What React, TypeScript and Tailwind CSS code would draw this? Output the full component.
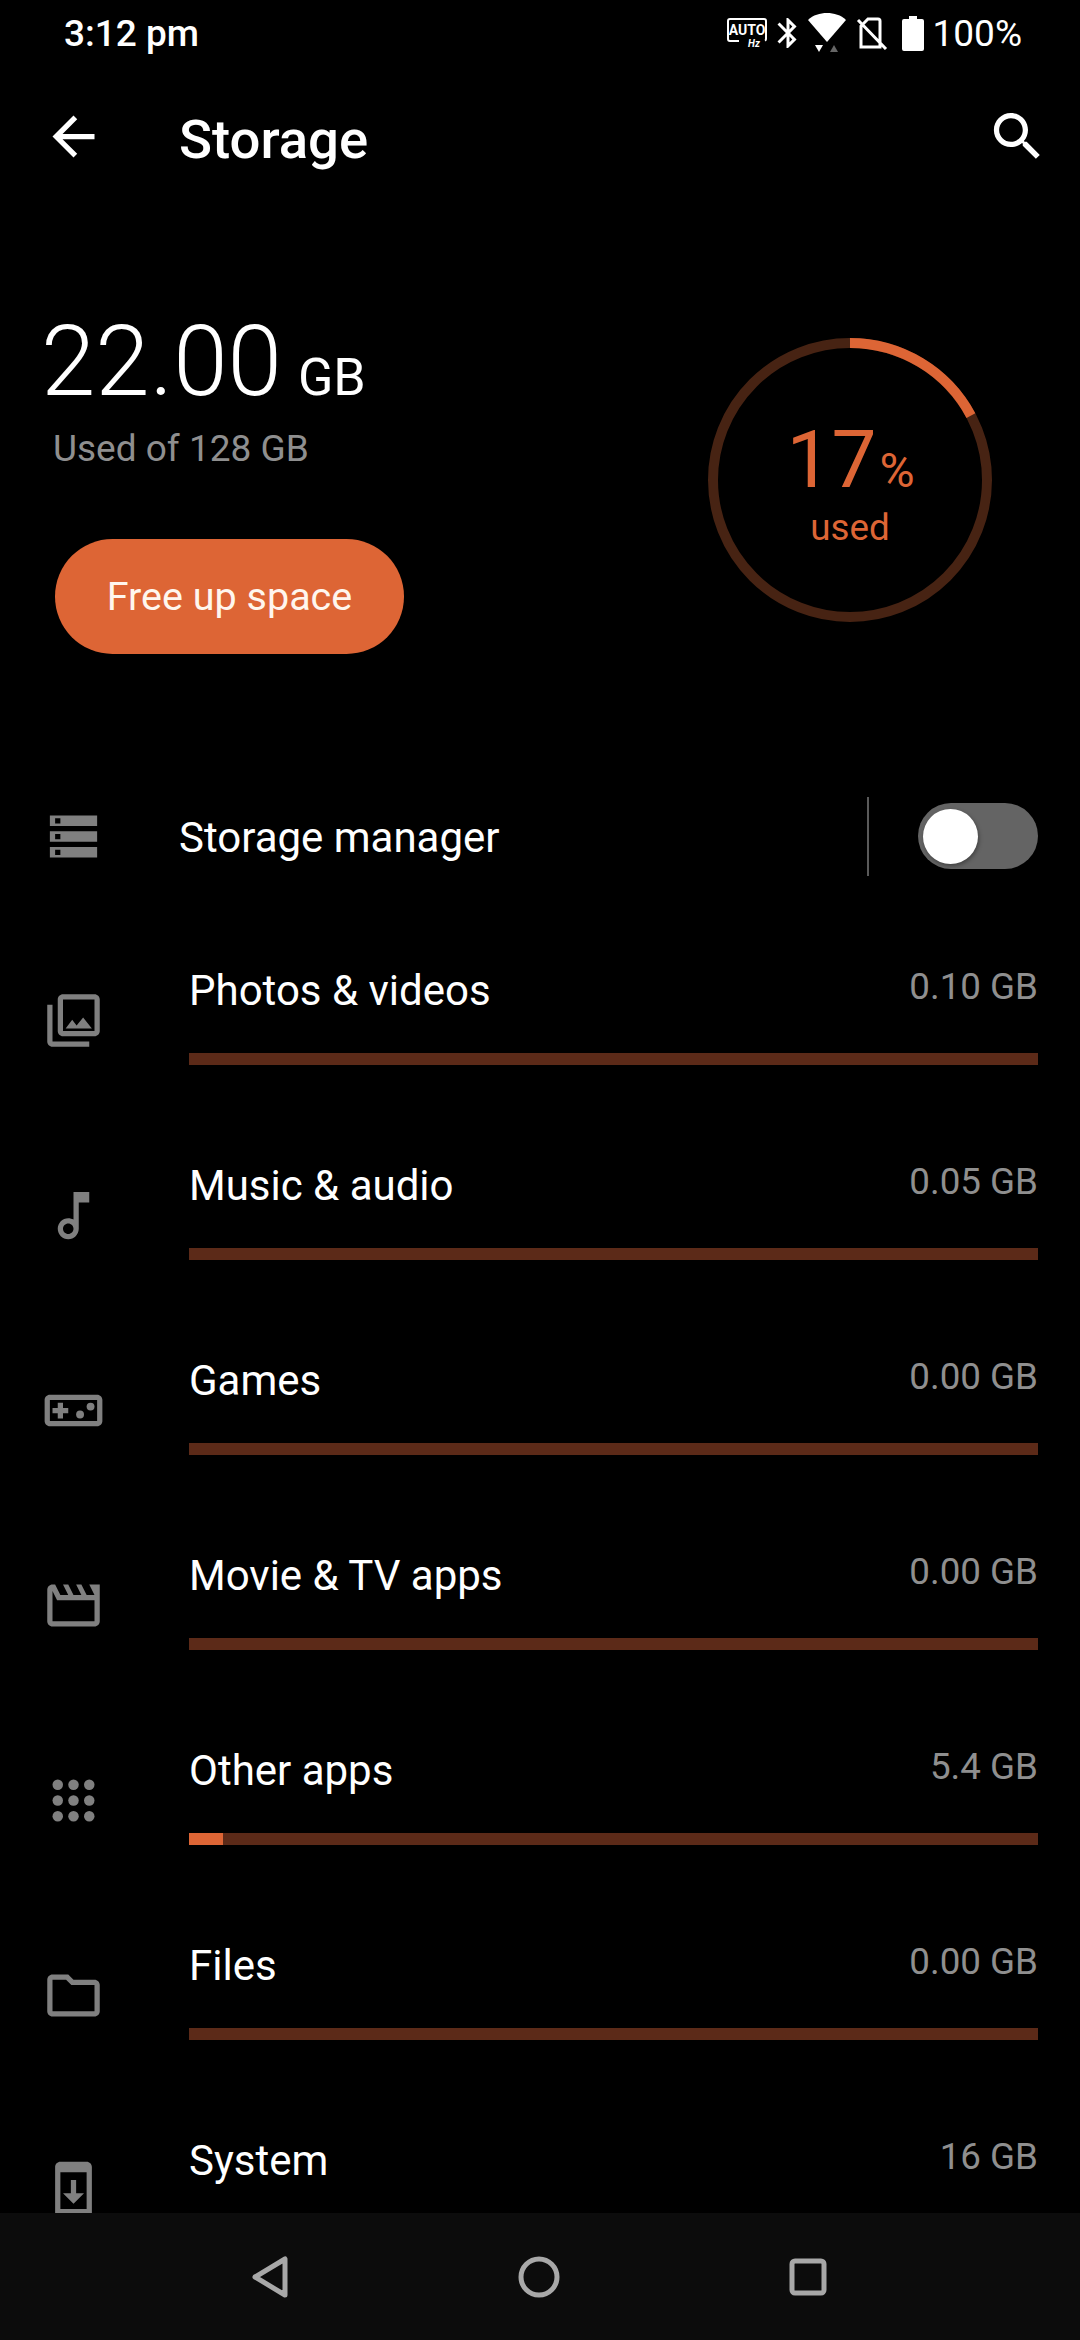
import type { ReactNode } from "react";

const ORANGE = "#dd6535";

function Icon({ d, children }: { d?: string; children?: ReactNode }) {
  return (
    <svg viewBox="0 0 24 24" className="h-[63px] w-[63px] shrink-0" fill="#808080">
      {d && <path d={d} />}
      {children}
    </svg>
  );
}

const rows: { label: string; value: string; fill: string; icon: ReactNode }[] = [
  {
    label: "Photos & videos",
    value: "0.10 GB",
    fill: "w-0",
    icon: (
      <Icon d="M20 4v12H8V4h12m0-2H8c-1.1 0-2 .9-2 2v12c0 1.1.9 2 2 2h12c1.1 0 2-.9 2-2V4c0-1.1-.9-2-2-2zm-8.5 9.67l1.69 2.26 2.48-3.1L19 15H9zM2 6v14c0 1.1.9 2 2 2h14v-2H4V6H2z" />
    ),
  },
  {
    label: "Music & audio",
    value: "0.05 GB",
    fill: "w-0",
    icon: (
      <Icon d="M12 3v10.55c-.59-.34-1.27-.55-2-.55-2.21 0-4 1.79-4 4s1.79 4 4 4 4-1.79 4-4V7h4V3h-6zm-2 16c-1.1 0-2-.9-2-2s.9-2 2-2 2 .9 2 2-.9 2-2 2z" />
    ),
  },
  {
    label: "Games",
    value: "0.00 GB",
    fill: "w-0",
    icon: (
      <Icon d="M21 6H3c-1.1 0-2 .9-2 2v8c0 1.1.9 2 2 2h18c1.1 0 2-.9 2-2V8c0-1.1-.9-2-2-2zm0 10H3V8h18v8zM6 15h2v-2h2v-2H8V9H6v2H4v2h2z">
        <circle cx="14.5" cy="13.5" r="1.5" />
        <circle cx="18.5" cy="10.5" r="1.5" />
      </Icon>
    ),
  },
  {
    label: "Movie & TV apps",
    value: "0.00 GB",
    fill: "w-0",
    icon: (
      <Icon d="M4 6.47L5.76 10H20v8H4V6.47M22 4h-4l2 4h-3l-2-4h-2l2 4h-3l-2-4H8l2 4H7L5 4H4c-1.1 0-1.99.9-1.99 2L2 18c0 1.1.9 2 2 2h16c1.1 0 2-.9 2-2V4z" />
    ),
  },
  {
    label: "Other apps",
    value: "5.4 GB",
    fill: "w-[34px]",
    icon: (
      <Icon>
        {[6, 12, 18].map((y) =>
          [6, 12, 18].map((x) => <circle key={`${x}-${y}`} cx={x} cy={y} r="2" />),
        )}
      </Icon>
    ),
  },
  {
    label: "Files",
    value: "0.00 GB",
    fill: "w-0",
    icon: (
      <Icon d="M9.17 6l2 2H20v10H4V6h5.17M10 4H4c-1.1 0-1.99.9-1.99 2L2 18c0 1.1.9 2 2 2h16c1.1 0 2-.9 2-2V8c0-1.1-.9-2-2-2h-8l-2-2z" />
    ),
  },
  {
    label: "System",
    value: "16 GB",
    fill: "w-[20px]",
    icon: (
      <Icon d="M17 1.01L7 1c-1.1 0-2 .9-2 2v18c0 1.1.9 2 2 2h10c1.1 0 2-.9 2-2V3c0-1.1-.9-1.99-2-1.99zM17 19H7V5h10v14zm-1-6h-3V8h-2v5H8l4 4 4-4z" />
    ),
  },
];

function StatusBar() {
  return (
    <div className="flex h-[66px] items-center justify-between pl-[64px] pr-[58px] text-white">
      <span className="text-[37px] font-medium leading-none">3:12 pm</span>
      <div className="flex items-center">
        {/* refresh rate */}
        <svg viewBox="0 0 40 30" className="h-[30px] w-[40px]">
          <path d="M12 23H3a2 2 0 0 1-2-2V3a2 2 0 0 1 2-2h34a2 2 0 0 1 2 2v18a2 2 0 0 1-1 1.7" fill="none" stroke="#fff" strokeWidth="2" />
          <text x="20" y="17" textAnchor="middle" fontSize="14" fontWeight="700" fill="#fff" fontFamily="Roboto">AUTO</text>
          <text x="27" y="29" textAnchor="middle" fontSize="10" fontWeight="700" fontStyle="italic" fill="#fff" fontFamily="Roboto">Hz</text>
        </svg>
        <svg viewBox="0 0 24 24" className="ml-[3px] h-[36px] w-[36px]" fill="#fff">
          <path d="M17.71 7.71L12 2h-1v7.59L6.41 5 5 6.41 10.59 12 5 17.59 6.41 19 11 14.41V22h1l5.71-5.71-4.3-4.29 4.3-4.29zM13 5.83l1.88 1.88L13 9.59V5.83zm1.88 10.46L13 18.17v-3.76l1.88 1.88z" />
        </svg>
        {/* wifi + activity arrows */}
        <svg viewBox="0 0 40 42" className="ml-[1px] h-[42px] w-[40px]">
          <path d="M20 30 1 8C6 3 13 1 20 1s14 2 19 7z" fill="#fff" />
          <path d="M8 33h8l-4 7z" fill="#fff" />
          <path d="M23 40h8l-4-7z" fill="#666" />
        </svg>
        <svg viewBox="0 0 32 34" className="ml-[9px] h-[34px] w-[32px]" fill="none" stroke="#fff" strokeWidth="3">
          <path d="M5 10v21h19V5a2 2 0 0 0-2-2H12zM2 4l28 29" />
        </svg>
        <svg viewBox="0 0 22 35" className="ml-[14px] h-[35px] w-[22px]" fill="#fff">
          <path d="M7 0h8v3h5a2 2 0 0 1 2 2v28a2 2 0 0 1-2 2H2a2 2 0 0 1-2-2V5a2 2 0 0 1 2-2h5z" />
        </svg>
        <span className="ml-[9px] text-[37px] leading-none">100%</span>
      </div>
    </div>
  );
}

function AppBar() {
  return (
    <div className="flex h-[144px] items-center pb-[3px] pl-[42px] pr-[31px] text-white">
      <svg viewBox="0 0 24 24" className="h-[63px] w-[63px]" fill="#fff">
        <path d="M20 11H7.83l5.59-5.59L12 4l-8 8 8 8 1.41-1.41L7.83 13H20v-2z" />
      </svg>
      <h1 className="ml-[74px] pt-[6px] text-[54.5px] font-medium leading-none">Storage</h1>
      <svg viewBox="0 0 24 24" className="ml-auto h-[63px] w-[63px]" fill="#fff">
        <path d="M15.5 14h-.79l-.28-.27C15.41 12.59 16 11.11 16 9.5 16 5.91 13.09 3 9.5 3S3 5.91 3 9.5 5.91 16 9.5 16c1.61 0 3.09-.59 4.23-1.57l.27.28v.79l5 4.99L20.49 19l-4.99-5zm-6 0C7.01 14 5 11.99 5 9.5S7.01 5 9.5 5 14 7.01 14 9.5 11.99 14 9.5 14z" />
      </svg>
    </div>
  );
}

function Ring() {
  const r = 137;
  const c = 2 * Math.PI * r;
  return (
    <div className="relative ml-[1px] h-[284px] w-[284px]">
      <svg viewBox="0 0 284 284" className="absolute inset-0 -rotate-90" fill="none" strokeWidth="10">
        <circle cx="142" cy="142" r={r} stroke="#472313" />
        <circle cx="142" cy="142" r={r} stroke={ORANGE} strokeDasharray={`${c * 0.172} ${c}`} />
      </svg>
      <div className="absolute inset-0 flex flex-col items-center text-[#dd6535]">
        <div className="ml-[1px] mt-[82px] flex h-[80px] items-baseline leading-none">
          <span className="text-[80px] font-normal">17</span>
          <span className="ml-[3px] text-[48px] font-normal">%</span>
        </div>
        <span className="mt-[10px] text-[36.75px] leading-none">used</span>
      </div>
    </div>
  );
}

function Hero() {
  return (
    <div className="flex h-[551px] items-start justify-between pl-[55px] pr-[88px] pt-[128px]">
      <div className="flex flex-col">
        <div className="-ml-[14px] -mt-[31px] flex items-baseline text-white">
          <span className="text-[98px] font-[350] leading-[110px]">22.00</span>
          <span className="ml-[16px] text-[52px] leading-none">GB</span>
        </div>
        <span className="-ml-[2px] mt-[10px] text-[37px] leading-[44px] text-[#8f8f8f]">Used of 128 GB</span>
        <button className="mt-[68px] flex h-[115px] w-[349px] items-center justify-center rounded-full bg-[#dd6535] text-[39.5px] text-[#fff6ee]">
          Free up space
        </button>
      </div>
      <Ring />
    </div>
  );
}

function ManagerRow() {
  return (
    <div className="mb-[12px] flex h-[150px] items-center pl-[42px] pr-[42px]">
      <Icon>
        <path
          fillRule="evenodd"
          d="M3 4h18v4H3zM5 5v2h2V5zM3 10h18v4H3zM5 11v2h2v-2zM3 16h18v4H3zM5 17v2h2v-2z"
        />
      </Icon>
      <span className="ml-[74px] pt-[4px] text-[42px] leading-none text-white">Storage manager</span>
      <div className="ml-auto h-[79px] w-[2px] bg-[#5a5a5a]" />
      <div className="ml-[49px] flex h-[66px] w-[120px] items-center rounded-full bg-[#646464] pl-[5px]">
        <div className="h-[55px] w-[55px] rounded-full bg-white shadow-[1px_2px_4px_rgba(0,0,0,0.35)]" />
      </div>
    </div>
  );
}

function StorageRow({ label, value, fill, icon }: (typeof rows)[number]) {
  return (
    <div className="flex h-[195px] shrink-0 items-center pl-[42px] pr-[42px]">
      {icon}
      <div className="ml-[84px] h-full flex-1 pt-[35px]">
        <div className="flex h-[62px] items-start justify-between">
          <span className="text-[42px] leading-[65px] text-white">{label}</span>
          <span className="text-[36.75px] leading-[58px] text-[#8f8f8f]">{value}</span>
        </div>
        <div className="mt-[33px] h-[12px] w-full bg-[#5c2a18]">
          <div className={`h-full bg-[#dd6535] ${fill}`} />
        </div>
      </div>
    </div>
  );
}

function NavBar() {
  return (
    <div className="flex h-[127px] shrink-0 items-center justify-center gap-[221px] bg-[#0c0c0c] pr-[3px]">
      <svg viewBox="0 0 48 48" className="h-[48px] w-[48px]" fill="none" stroke="#a8a8a8" strokeWidth="5" strokeLinejoin="round">
        <path d="M39 6v36L9 24z" />
      </svg>
      <svg viewBox="0 0 48 48" className="h-[48px] w-[48px]" fill="none" stroke="#a8a8a8" strokeWidth="5">
        <circle cx="24" cy="24" r="18" />
      </svg>
      <svg viewBox="0 0 48 48" className="h-[48px] w-[48px]" fill="none" stroke="#a8a8a8" strokeWidth="5">
        <rect x="8" y="8" width="32" height="32" rx="3" />
      </svg>
    </div>
  );
}

export default function App() {
  return (
    <div className="flex h-[2340px] w-[1080px] flex-col overflow-hidden bg-black font-['Roboto',sans-serif]">
      <div className="min-h-0 flex-1 overflow-hidden">
        <StatusBar />
        <AppBar />
        <Hero />
        <ManagerRow />
        {rows.map((row) => (
          <StorageRow key={row.label} {...row} />
        ))}
      </div>
      <NavBar />
    </div>
  );
}
